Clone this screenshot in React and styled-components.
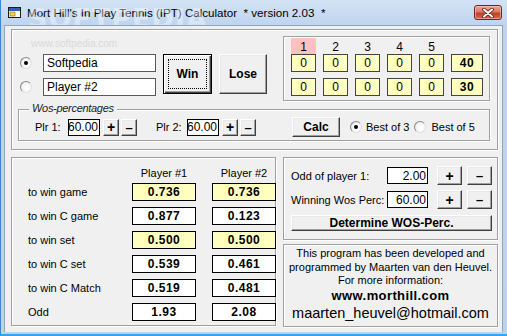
import { Fragment } from "react";
import styled, { createGlobalStyle } from "styled-components";

const GlobalStyle = createGlobalStyle`
  html, body { margin: 0; padding: 0; background: #fff; }
  body { font-family: "Liberation Sans", Arial, sans-serif; font-size: 11px; color: #000; }
  * { box-sizing: border-box; }
`;

const Window = styled.div`
  position: relative;
  width: 507px;
  height: 336px;
  display: flex;
  flex-direction: column;
  overflow: hidden;
  background: linear-gradient(180deg, #d3e3f5 0px, #bfd5ee 24px, #bcd3ed 100%);
  border-left: 1px solid #3a86d8;
  border-bottom: 2px solid #33a3ea;
  padding-bottom: 2px;
`;

const TitleBar = styled.div`
  height: 25px;
  display: flex;
  align-items: center;
  padding-left: 7px;
  flex-shrink: 0;
`;

const TitleText = styled.span`
  margin-left: 5px;
  font-family: "Liberation Sans", Arial, sans-serif;
  font-size: 11.6px;
  white-space: pre;
  color: #000;
`;

const Watermark = styled.span`
  position: absolute;
  left: 27px;
  top: 3px;
  font-family: "DejaVu Sans", sans-serif;
  font-weight: bold;
  font-size: 27px;
  letter-spacing: 1px;
  color: rgba(255, 255, 255, 0.4);
  pointer-events: none;
`;

const CloseButton = styled.div`
  margin-left: auto;
  margin-right: 5px;
  align-self: flex-start;
  margin-top: 5px;
  width: 28px;
  height: 15px;
  border: 1px solid #6e2418;
  border-radius: 3px;
  background: linear-gradient(180deg, #e9a797 0%, #d97866 45%, #c2412c 55%, #d2694f 100%);
  box-shadow: inset 0 0 0 1px rgba(255, 220, 210, 0.5);
  display: flex;
  align-items: center;
  justify-content: center;
`;

const Client = styled.div`
  position: relative;
  flex: 1;
  margin: 0 4px 0 3px;
  background: #f0f0f0;
  border: 1px solid #8fa5be;
  border-bottom: none;
  padding: 3px 4px 0 6px;
  display: flex;
  flex-direction: column;
`;

const SiteMark = styled.span`
  position: absolute;
  left: 26px;
  top: 12px;
  font-size: 10px;
  color: #d9d9d9;
  pointer-events: none;
`;

const Group = styled.div`
  position: relative;
  border: 1px solid #a0a0a0;
  box-shadow: inset 1px 1px #fff, 1px 1px #fff;
`;

const TopGroup = styled(Group)`
  width: 487px;
  height: 121px;
  padding: 7px 7px 0 6px;
  display: flex;
  flex-direction: column;
`;

const TopRow = styled.div`
  display: flex;
  align-items: flex-start;
`;

const PlayerBlock = styled.div`
  margin-top: 17px;
  display: grid;
  grid-template-columns: 12px 113px;
  column-gap: 11px;
  row-gap: 6px;
  align-items: center;
  padding-left: 2px;
`;

const Radio = styled.span`
  position: relative;
  display: inline-block;
  width: 12px;
  height: 12px;
  margin-left: ${(p) => p.$ml || 0}px;
  border-radius: 50%;
  background: radial-gradient(circle at 60% 60%, #ffffff 0%, #f4f4f4 55%, #d8d8d8 100%);
  border: 1px solid;
  border-color: #8a8a8a #e0e0e0 #e0e0e0 #8a8a8a;
  flex-shrink: 0;
  &::after {
    content: "";
    display: ${(p) => (p.$on ? "block" : "none")};
    position: absolute;
    left: 3px;
    top: 3px;
    width: 4px;
    height: 4px;
    border-radius: 50%;
    background: #000;
  }
`;

const TextBox = styled.div`
  height: ${(p) => p.$h || 18}px;
  width: ${(p) => (p.$w ? `${p.$w}px` : "auto")};
  background: ${(p) => (p.$yellow ? "#ffffc0" : "#fff")};
  border: 1px solid ${(p) => p.$border || "#000"};
  font-size: ${(p) => p.$size || 12}px;
  font-weight: ${(p) => (p.$bold ? "bold" : "normal")};
  letter-spacing: ${(p) => (p.$bold ? "0.5px" : "0")};
  display: flex;
  align-items: center;
  justify-content: ${(p) => p.$align || "center"};
  padding: 0 ${(p) => (p.$align === "flex-end" ? 1 : 3)}px;
  white-space: nowrap;
  flex-shrink: 0;
`;

const Button = styled.div`
  position: relative;
  width: ${(p) => p.$w}px;
  height: ${(p) => p.$h}px;
  margin-left: ${(p) => p.$ml || 0}px;
  margin-top: ${(p) => p.$mt || 0}px;
  background: #f0f0f0;
  border: 1px solid;
  border-color: #fff #404040 #404040 #fff;
  box-shadow: inset -1px -1px #a0a0a0, inset 1px 1px #e8e8e8;
  font-weight: bold;
  font-size: ${(p) => p.$size || 12}px;
  display: flex;
  align-items: center;
  justify-content: center;
  flex-shrink: 0;
`;

const DefaultButton = styled(Button)`
  border: 1px solid #000;
  box-shadow: inset 1px 1px #fff, inset -1px -1px #404040, inset -2px -2px #a0a0a0;
  &::after {
    content: "";
    position: absolute;
    inset: 4px;
    border: 1px dotted #000;
  }
`;

const BigButtons = styled.div`
  margin-top: 17px;
  margin-left: 7px;
  display: flex;
  gap: 7px;
`;

const ScorePanel = styled(Group)`
  margin-left: auto;
  margin-top: -1px;
  width: 207px;
  height: 65px;
  padding: 1px 6px 0 7px;
  display: flex;
  flex-direction: column;
`;

const ScoreRow = styled.div`
  display: flex;
  gap: 7px;
  margin-bottom: ${(p) => p.$mb || 0}px;
`;

const SetHead = styled.div`
  width: ${(p) => p.$w || 25}px;
  height: 16px;
  background: ${(p) => (p.$active ? "#ffc0c0" : "transparent")};
  font-size: 12px;
  display: flex;
  align-items: center;
  justify-content: center;
  padding-top: 2px;
`;

const WosGroup = styled(Group)`
  margin-top: 8px;
  height: 32px;
  padding: 4px 0 0 16px;
  display: flex;
  align-items: center;
`;

const Legend = styled.span`
  position: absolute;
  left: 10px;
  top: -8px;
  padding: 0 3px;
  background: #f0f0f0;
  font-style: italic;
  font-size: 11px;
  letter-spacing: -0.3px;
  color: #222;
`;

const Label = styled.span`
  width: ${(p) => (p.$w ? `${p.$w}px` : "auto")};
  margin-left: ${(p) => p.$ml || 0}px;
  font-size: ${(p) => p.$size || 11}px;
  white-space: nowrap;
  flex-shrink: 0;
`;

const BottomRow = styled.div`
  margin-top: 7px;
  display: flex;
  gap: 7px;
`;

const ProbGroup = styled(Group)`
  width: 265px;
  height: 169px;
  padding: 11px 0 0 16px;
`;

const ProbGrid = styled.div`
  display: grid;
  grid-template-columns: 88px 64px 64px;
  grid-template-rows: 8px repeat(6, 18px);
  column-gap: 16px;
  row-gap: 6px;
  align-items: center;
`;

const ColHead = styled.span`
  text-align: center;
  font-size: 11px;
  line-height: 12px;
`;

const RightCol = styled.div`
  display: flex;
  flex-direction: column;
  gap: 4px;
`;

const OddGroup = styled(Group)`
  width: 215px;
  height: 83px;
  padding: 8px 0 0 7px;
  display: flex;
  flex-direction: column;
  gap: 5px;
`;

const OddRow = styled.div`
  display: flex;
  align-items: center;
  height: 19px;
`;

const InfoGroup = styled(Group)`
  width: 215px;
  height: 83px;
  padding-top: 2px;
  display: flex;
  flex-direction: column;
  align-items: center;
  text-align: center;
`;

const InfoLine = styled.div`
  font-size: ${(p) => p.$size || 11}px;
  line-height: ${(p) => p.$lh || 13.5}px;
  font-weight: ${(p) => (p.$bold ? "bold" : "normal")};
  letter-spacing: ${(p) => (p.$bold ? "0.4px" : "0")};
  white-space: nowrap;
`;

const AppIcon = () => (
  <svg width="14" height="13" viewBox="0 0 14 13">
    <rect x="0.5" y="1.5" width="12" height="10" fill="#fff" stroke="#1b1b1b" />
    <rect x="1" y="2" width="11" height="3" fill="#2c5fb8" />
    <rect x="2" y="6" width="5" height="4" fill="#f4d25a" stroke="#8a6a10" strokeWidth="0.6" />
  </svg>
);

const CloseGlyph = () => (
  <svg width="14" height="10" viewBox="0 0 14 10">
    <path d="M3 1.5 L11 8.5 M11 1.5 L3 8.5" stroke="#5a1a10" strokeWidth="3.6" strokeLinecap="round" />
    <path d="M3 1.5 L11 8.5 M11 1.5 L3 8.5" stroke="#fff" strokeWidth="2" strokeLinecap="round" />
  </svg>
);

const sets = [1, 2, 3, 4, 5];
const p1Score = ["0", "0", "0", "0", "0"];
const p2Score = ["0", "0", "0", "0", "0"];

const probRows = [
  { label: "to win game", a: "0.736", b: "0.736", yellow: true },
  { label: "to win C game", a: "0.877", b: "0.123" },
  { label: "to win set", a: "0.500", b: "0.500", yellow: true },
  { label: "to win C set", a: "0.539", b: "0.461" },
  { label: "to win C Match", a: "0.519", b: "0.481" },
  { label: "Odd", a: "1.93", b: "2.08" },
];

const PlusMinus = ({ w, h, mlPlus, mlMinus }) => (
  <>
    <Button $w={w} $h={h} $ml={mlPlus} $size={14}>+</Button>
    <Button $w={w} $h={h} $ml={mlMinus} $size={13}>–</Button>
  </>
);

const App = () => {
  return (
    <Window>
      <GlobalStyle />
      <TitleBar>
        <AppIcon />
        <TitleText>Mort Hill's In Play Tennis (IPT) Calculator  * version 2.03  *</TitleText>
        <CloseButton>
          <CloseGlyph />
        </CloseButton>
      </TitleBar>
      <Watermark>SOFTPEDIA</Watermark>
      <Client>
        <SiteMark>www.softpedia.com</SiteMark>
        <TopGroup>
          <TopRow>
            <PlayerBlock>
              <Radio $on />
              <TextBox $align="flex-start" $border="#5a5a5a">Softpedia</TextBox>
              <Radio />
              <TextBox $align="flex-start" $border="#5a5a5a">Player #2</TextBox>
            </PlayerBlock>
            <BigButtons>
              <DefaultButton $w={49} $h={40}>Win</DefaultButton>
              <Button $w={48} $h={40}>Lose</Button>
            </BigButtons>
            <ScorePanel>
              <ScoreRow>
                {sets.map((s) => (
                  <SetHead key={s} $active={s === 1}>{s}</SetHead>
                ))}
                <SetHead $w={32} />
              </ScoreRow>
              <ScoreRow $mb={6}>
                {p1Score.map((v, i) => (
                  <TextBox key={i} $w={25} $yellow $border="#444">{v}</TextBox>
                ))}
                <TextBox $w={32} $yellow $bold $border="#444">40</TextBox>
              </ScoreRow>
              <ScoreRow>
                {p2Score.map((v, i) => (
                  <TextBox key={i} $w={25} $yellow $border="#444">{v}</TextBox>
                ))}
                <TextBox $w={32} $yellow $bold $border="#444">30</TextBox>
              </ScoreRow>
            </ScorePanel>
          </TopRow>
          <WosGroup>
            <Legend>Wos-percentages</Legend>
            <Label $w={33}>Plr 1:</Label>
            <TextBox $w={32} $h={17} $align="flex-end" $size={12}>60.00</TextBox>
            <PlusMinus w={16} h={17} mlPlus={3} mlMinus={2} />
            <Label $w={31} $ml={19}>Plr 2:</Label>
            <TextBox $w={32} $h={17} $align="flex-end" $size={12}>60.00</TextBox>
            <PlusMinus w={16} h={17} mlPlus={3} mlMinus={2} />
            <Button $w={48} $h={20} $ml={36}>Calc</Button>
            <Radio $on $ml={10} />
            <Label $ml={4}>Best of 3</Label>
            <Radio $ml={5} />
            <Label $ml={5}>Best of 5</Label>
          </WosGroup>
        </TopGroup>
        <BottomRow>
          <ProbGroup>
            <ProbGrid>
              <span />
              <ColHead>Player #1</ColHead>
              <ColHead>Player #2</ColHead>
              {probRows.map((r) => (
                <Fragment key={r.label}>
                  <Label>{r.label}</Label>
                  <TextBox $yellow={r.yellow} $bold>{r.a}</TextBox>
                  <TextBox $yellow={r.yellow} $bold>{r.b}</TextBox>
                </Fragment>
              ))}
            </ProbGrid>
          </ProbGroup>
          <RightCol>
            <OddGroup>
              <OddRow>
                <Label $w={96}>Odd of player 1:</Label>
                <TextBox $w={41} $h={17} $align="flex-end" $size={12}>2.00</TextBox>
                <PlusMinus w={25} h={19} mlPlus={9} mlMinus={5} />
              </OddRow>
              <OddRow>
                <Label $w={96}>Winning Wos Perc:</Label>
                <TextBox $w={41} $h={17} $align="flex-end" $size={12}>60.00</TextBox>
                <PlusMinus w={25} h={19} mlPlus={9} mlMinus={5} />
              </OddRow>
              <Button $w={201} $h={16} $mt={1}>Determine WOS-Perc.</Button>
            </OddGroup>
            <InfoGroup>
              <InfoLine>This program has been developed and</InfoLine>
              <InfoLine>programmed by Maarten van den Heuvel.</InfoLine>
              <InfoLine>For more information:</InfoLine>
              <InfoLine $bold $size={13} $lh={16}>www.morthill.com</InfoLine>
              <InfoLine $size={14.5} $lh={18}>maarten_heuvel@hotmail.com</InfoLine>
            </InfoGroup>
          </RightCol>
        </BottomRow>
      </Client>
    </Window>
  );
};

export default App;
